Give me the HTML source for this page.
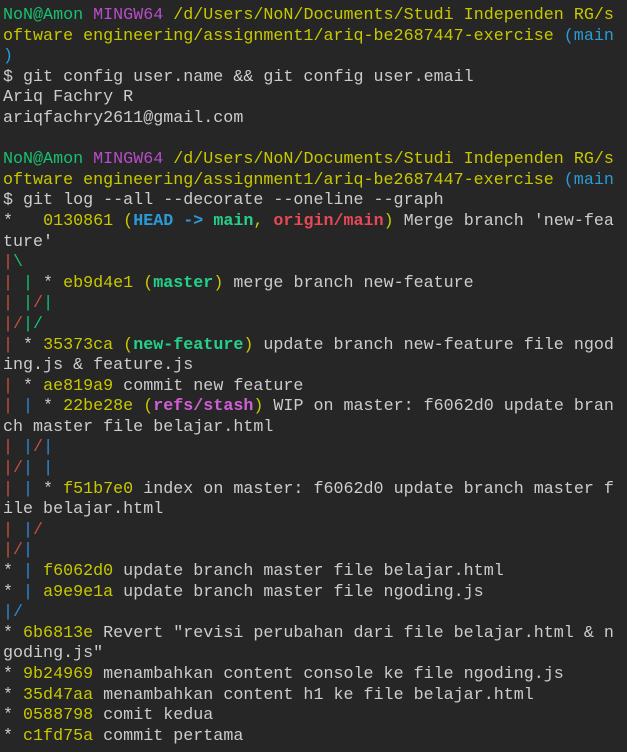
<!DOCTYPE html>
<html><head><meta charset="utf-8"><style>
html,body{margin:0;padding:0;background:#262626;width:627px;height:752px;overflow:hidden}
pre{margin:0;padding:6px 0 0 3px;font-family:"Liberation Mono",monospace;font-size:16.7px;line-height:20.6px;color:#cccccc;white-space:pre}
.g{color:#16c172}.p{color:#b84dc9}.y{color:#c8c800}.c{color:#2a9bd6}
.h{color:#c8c800}
.hd{color:#2a9bd6;font-weight:bold}.mn{color:#23d18b;font-weight:bold}.og{color:#e74856;font-weight:bold}.st{color:#d15fd6;font-weight:bold}
.r{color:#c94f3f}.gr{color:#16c172}.bl{color:#2e8ad8}
</style></head><body><pre><span class="g">NoN@Amon</span> <span class="p">MINGW64</span> <span class="y">/d/Users/NoN/Documents/Studi Independen RG/s
oftware engineering/assignment1/ariq-be2687447-exercise</span> <span class="c">(main
)</span>
$ git config user.name &amp;&amp; git config user.email
Ariq Fachry R
ariqfachry2611@gmail.com

<span class="g">NoN@Amon</span> <span class="p">MINGW64</span> <span class="y">/d/Users/NoN/Documents/Studi Independen RG/s
oftware engineering/assignment1/ariq-be2687447-exercise</span> <span class="c">(main</span>
$ git log --all --decorate --oneline --graph
*   <span class="h">0130861 (</span><span class="hd">HEAD -&gt; </span><span class="mn">main</span><span class="h">, </span><span class="og">origin/main</span><span class="h">)</span> Merge branch 'new-fea
ture'
<span class="r">|</span><span class="gr">\</span>
<span class="r">|</span> <span class="gr">|</span> * <span class="h">eb9d4e1 (</span><span class="mn">master</span><span class="h">)</span> merge branch new-feature
<span class="r">|</span> <span class="gr">|</span><span class="r">/</span><span class="gr">|</span>
<span class="r">|/</span><span class="gr">|/</span>
<span class="r">|</span> * <span class="h">35373ca (</span><span class="mn">new-feature</span><span class="h">)</span> update branch new-feature file ngod
ing.js &amp; feature.js
<span class="r">|</span> * <span class="h">ae819a9</span> commit new feature
<span class="r">|</span> <span class="bl">|</span> * <span class="h">22be28e (</span><span class="st">refs/stash</span><span class="h">)</span> WIP on master: f6062d0 update bran
ch master file belajar.html
<span class="r">|</span> <span class="bl">|</span><span class="r">/</span><span class="bl">|</span>
<span class="r">|/</span><span class="bl">|</span> <span class="bl">|</span>
<span class="r">|</span> <span class="bl">|</span> * <span class="h">f51b7e0</span> index on master: f6062d0 update branch master f
ile belajar.html
<span class="r">|</span> <span class="bl">|</span><span class="r">/</span>
<span class="r">|/</span><span class="bl">|</span>
* <span class="bl">|</span> <span class="h">f6062d0</span> update branch master file belajar.html
* <span class="bl">|</span> <span class="h">a9e9e1a</span> update branch master file ngoding.js
<span class="bl">|/</span>
* <span class="h">6b6813e</span> Revert "revisi perubahan dari file belajar.html &amp; n
goding.js"
* <span class="h">9b24969</span> menambahkan content console ke file ngoding.js
* <span class="h">35d47aa</span> menambahkan content h1 ke file belajar.html
* <span class="h">0588798</span> comit kedua
* <span class="h">c1fd75a</span> commit pertama
</pre></body></html>
